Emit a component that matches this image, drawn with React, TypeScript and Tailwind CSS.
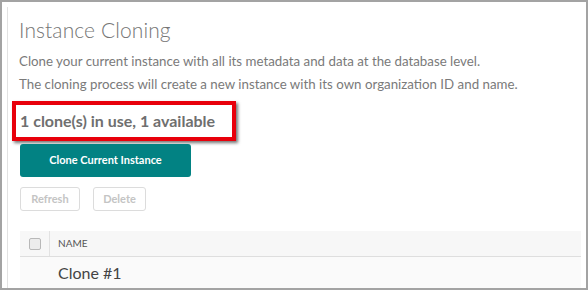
export default function App() {
  return (
    <div className="w-[588px] h-[290px] bg-white border-2 border-[#a3a3a3] overflow-hidden font-['Lato',sans-serif]">
      <div className="ml-[5px] mt-[5px] h-full border-l border-[#e2e2e2] pl-[11px] pr-[5px]">
        <h1 className="pt-[9px] text-[21px] leading-[28px] font-light text-[#757575] tracking-[0.1px]">
          Instance Cloning
        </h1>
        <p className="mt-[9px] text-[13.3px] leading-[16px] text-[#7a7a7a]">
          Clone your current instance with all its metadata and data at the database level.
        </p>
        <p className="mt-[7px] text-[13.3px] leading-[16px] text-[#7a7a7a]">
          The cloning process will create a new instance with its own organization ID and name.
        </p>
        <div className="mt-[9px] -ml-[7px] w-[224px] h-[40px] border-[4px] border-[#e8000b] shadow-[2px_2px_3px_rgba(0,0,0,0.55)] flex items-center pl-[4px]">
          <span className="text-[16px] font-bold text-[#6f6f6f]">1 clone(s) in use, 1 available</span>
        </div>
        <button className="mt-[3px] ml-[1px] w-[171px] h-[33px] rounded-[3px] bg-[#028283] text-white text-[11px] font-bold flex items-center justify-center">
          Clone Current Instance
        </button>
        <div className="mt-[10px] ml-[1px] flex gap-[13px]">
          <button className="w-[60px] h-[24px] rounded-[3px] border border-[#dcdcdc] text-[11px] font-bold text-[#c4c4c4]">
            Refresh
          </button>
          <button className="w-[53px] h-[24px] rounded-[3px] border border-[#dcdcdc] text-[11px] font-bold text-[#c4c4c4]">
            Delete
          </button>
        </div>
        <div className="mt-[20px] ml-[1px]">
          <div className="h-[26px] bg-[#f7f7f7] border-b border-[#dedede] flex items-center">
            <div className="w-[29px] flex justify-center">
              <div className="w-[12px] h-[12px] rounded-[2px] border border-[#b8b8b8] bg-[#ececec]" />
            </div>
            <div className="h-full w-px bg-[#e2e2e2]" />
            <span className="ml-[8px] text-[10px] text-[#555]">NAME</span>
          </div>
          <div className="h-[32px] bg-[#fafafa] flex items-center pl-[38px]">
            <span className="text-[16px] text-[#444]">Clone #1</span>
          </div>
        </div>
      </div>
    </div>
  );
}
